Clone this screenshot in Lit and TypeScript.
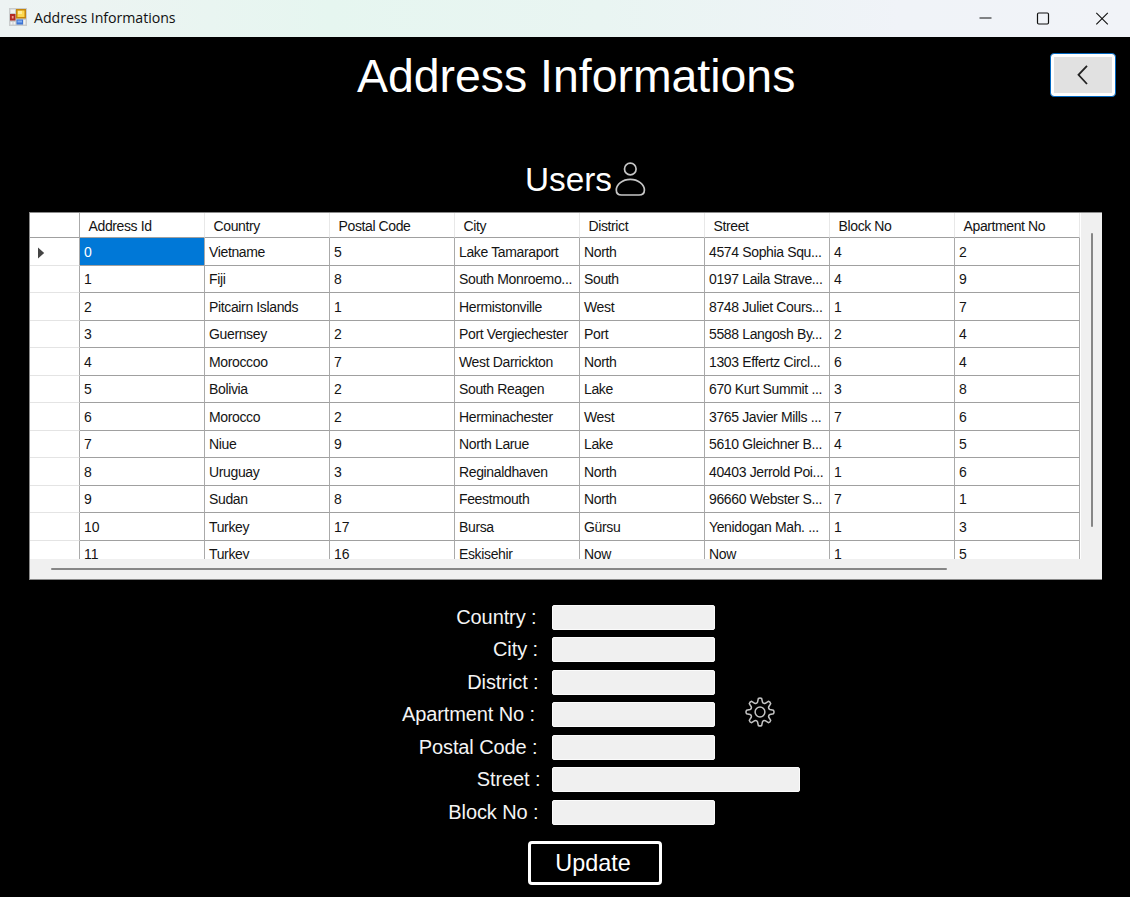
import { LitElement, html, css } from "lit";
import { customElement } from "lit/decorators.js";
import { classMap } from "lit/directives/class-map.js";

const COLUMNS = ["Address Id", "Country", "Postal Code", "City", "District", "Street", "Block No", "Apartment No"];

const ROWS: string[][] = [
  ["0", "Vietname", "5", "Lake Tamaraport", "North", "4574 Sophia Squ...", "4", "2"],
  ["1", "Fiji", "8", "South Monroemo...", "South", "0197 Laila Strave...", "4", "9"],
  ["2", "Pitcairn Islands", "1", "Hermistonville", "West", "8748 Juliet Cours...", "1", "7"],
  ["3", "Guernsey", "2", "Port Vergiechester", "Port", "5588 Langosh By...", "2", "4"],
  ["4", "Moroccoo", "7", "West Darrickton", "North", "1303 Effertz Circl...", "6", "4"],
  ["5", "Bolivia", "2", "South Reagen", "Lake", "670 Kurt Summit ...", "3", "8"],
  ["6", "Morocco", "2", "Herminachester", "West", "3765 Javier Mills ...", "7", "6"],
  ["7", "Niue", "9", "North Larue", "Lake", "5610 Gleichner B...", "4", "5"],
  ["8", "Uruguay", "3", "Reginaldhaven", "North", "40403 Jerrold Poi...", "1", "6"],
  ["9", "Sudan", "8", "Feestmouth", "North", "96660 Webster S...", "7", "1"],
  ["10", "Turkey", "17", "Bursa", "Gürsu", "Yenidogan Mah. ...", "1", "3"],
  ["11", "Turkey", "16", "Eskisehir", "Now", "Now", "1", "5"],
];

interface Field {
  label: string;
  // Distance from the end of the label to its box.
  gap: number;
  wide?: boolean;
  gear?: boolean;
}

const FIELDS: Field[] = [
  { label: "Country :", gap: 15.5 },
  { label: "City :", gap: 14 },
  { label: "District :", gap: 13.5 },
  { label: "Apartment No :", gap: 17 },
  { label: "Postal Code :", gap: 14.5 },
  { label: "Street :", gap: 11.5, wide: true },
  { label: "Block No :", gap: 13.5 },
];
FIELDS[3].gear = true;

@customElement("title-bar")
class TitleBar extends LitElement {
  static styles = css`
    :host {
      display: flex;
      flex: none;
      align-items: center;
      height: 37px;
      background: linear-gradient(90deg, #edf3f3 0, #ecf4f2 90px, #e6f6f0 330px, #e9f5f2 600px, #f0f3f8 900px, #f1f3f8 100%);
      color: #111;
      font: 14.2px "Open Sans", sans-serif;
    }
    .app-icon { margin: -3px 7px 0 9px; flex: none; }
    .caption { flex: 1; margin-top: -2px; letter-spacing: -0.06px; white-space: nowrap; }
    .controls { display: flex; }
    .control { display: block; width: 58.5px; height: 36px; }
  `;
  render() {
    return html`
      <svg class="app-icon" width="18" height="18" viewBox="0 0 18 18">
        <rect width="18" height="18" fill="#c9cccd" />
        <path d="M1.5 1.5h4.5v3.5h-4.5zM1.5 14h2v2.5h-2zM4.5 14h1.8v2.5h-1.8zM14.5 12h2v4.5h-2z" fill="#f1f3f3" />
        <rect x="7" y="1" width="10" height="9.5" fill="#c4860c" />
        <rect x="8.5" y="2.5" width="7" height="6.5" fill="#fcd850" />
        <rect x="9" y="3" width="4" height="3" fill="#ffec94" />
        <rect x="1" y="6" width="5.5" height="6.5" fill="#b22a23" />
        <rect x="2.8" y="8" width="1.8" height="2.5" fill="#ef9c8d" />
        <rect x="7.5" y="11.5" width="6.5" height="5" fill="#3d74d4" />
        <rect x="8.5" y="12.5" width="4.5" height="2" fill="#82b0f2" />
      </svg>
      <span class="caption">Address Informations</span>
      <div class="controls">
        <svg class="control" viewBox="0 0 58.5 36"><path d="M24.500 17h12" stroke="#111" stroke-width="1" /></svg>
        <svg class="control" viewBox="0 0 58.5 36"><rect x="24.500" y="12" width="11" height="11" rx="1.2" fill="none" stroke="#111" stroke-width="1.2" /></svg>
        <svg class="control" viewBox="0 0 58.5 36"><path d="M24.300 11.800l11.500 11.500M35.800 11.800L24.300 23.300" stroke="#111" stroke-width="1.1" /></svg>
      </div>
    `;
  }
}

@customElement("address-grid")
class AddressGrid extends LitElement {
  static styles = css`
    :host {
      display: grid;
      flex: none;
      grid-template-columns: 1fr 21px;
      grid-template-rows: 346px 20px;
      box-sizing: border-box;
      width: 1073px;
      height: 368px;
      border: 1px solid #8a8a8a;
      border-right: 0;
      background: #f0f0f0;
      color: #141414;
      font: 14px/26px "Liberation Sans", sans-serif;
      letter-spacing: -0.36px;
    }
    .view { overflow: hidden; background: #fff; }
    .row { display: grid; grid-template-columns: 50px repeat(8, 125px); height: 27.5px; }
    .row.header { height: 25px; }
    .cell {
      box-sizing: border-box;
      border-right: 1px solid #aaa;
      border-bottom: 1px solid #a0a0a0;
      padding: 0.6px 0 0 4px;
      overflow: hidden;
      white-space: nowrap;
    }
    .header .cell { padding: 0 0 0 8.6px; letter-spacing: -0.4px; border-right-color: #e8e8e8; }
    .header .cell.handle { border-right-color: #aaa; border-bottom-color: #a0a0a0; }
    .cell.handle { padding: 9px 0 0 7px; border-bottom-color: #e4e4e4; }
    .cell.number { letter-spacing: -0.1px; }
    .cell.selected { background: #0078d7; color: #fff; }
    .marker { display: block; }
    .vertical { padding: 20px 0 0 10px; }
    .vertical .thumb { width: 2px; height: 294px; border-radius: 1px; background: #868686; }
    .horizontal { grid-column: 1 / 3; padding: 9px 0 0 21px; }
    .horizontal .thumb { width: 896px; height: 2px; border-radius: 1px; background: #868686; }
  `;
  render() {
    return html`
      <div class="view">
        <div class="row header">
          <div class="cell handle"></div>
          ${COLUMNS.map((name) => html`<div class="cell">${name}</div>`)}
        </div>
        ${ROWS.map(
          (row, r) => html`<div class="row">
            <div class="cell handle">
              ${r === 0
                ? html`<svg class="marker" width="8" height="12" viewBox="0 0 8 12"><path d="M1 0.5L7.2 6L1 11.5z" fill="#444" /></svg>`
                : ""}
            </div>
            ${row.map(
              (text, c) =>
                html`<div class=${classMap({ cell: true, number: /^\d+$/.test(text), selected: r === 0 && c === 0 })}>${text}</div>`
            )}
          </div>`
        )}
      </div>
      <div class="vertical"><div class="thumb"></div></div>
      <div class="horizontal"><div class="thumb"></div></div>
    `;
  }
}

@customElement("address-form")
class AddressForm extends LitElement {
  static styles = css`
    :host {
      display: flex;
      flex: none;
      flex-direction: column;
      gap: 7.5px;
      color: #f4f4f4;
      font: 20px/25px "Liberation Sans", sans-serif;
      letter-spacing: -0.1px;
    }
    .line { display: flex; height: 25px; }
    .label { box-sizing: border-box; width: 552px; text-align: right; white-space: nowrap; padding-top: 0.4px; }
    .field { box-sizing: border-box; width: 163px; height: 25px; border: 1px solid #fbfbfb; border-radius: 2px; background: #f0f0f0; }
    .field.wide { width: 248px; }
    .gear { margin: -5.500px 0 0 30px; }
  `;
  render() {
    return html`
      ${FIELDS.map(
        ({ label, gap, wide, gear }) => html`
          <div class="line">
            <div class="label" style="padding-right:${gap}px">${label}</div>
            <div class=${classMap({ field: true, wide: !!wide })}></div>
            ${gear
              ? html`<svg class="gear" width="30" height="30" viewBox="-15 -15 30 30" fill="none" stroke="#c4c4c4" stroke-width="1.5" stroke-linejoin="round">
                  <path d=${gearPath()} />
                  <circle r="4.9" />
                </svg>`
              : ""}
          </div>
        `
      )}
    `;
  }
}

// Outline of an eight-toothed cog centred on the origin.
function gearPath(): string {
  const at = (radius: number, deg: number) => {
    const a = (deg * Math.PI) / 180;
    return `${(radius * Math.cos(a)).toFixed(2)} ${(radius * Math.sin(a)).toFixed(2)}`;
  };
  let d = `M${at(10.2, -14)}`;
  for (let i = 0; i < 8; i++) {
    const t = i * 45;
    d += `L${at(13.6, t - 7)}Q${at(14.5, t)} ${at(13.6, t + 7)}L${at(10.2, t + 14)}Q${at(8.8, t + 22.5)} ${at(10.2, t + 31)}`;
  }
  return d + "Z";
}

@customElement("app-root")
class AppRoot extends LitElement {
  static styles = css`
    :host {
      display: flex;
      flex-direction: column;
      width: 1130px;
      height: 897px;
      overflow: hidden;
      background: #000;
      color: #fff;
      font-family: "Liberation Sans", sans-serif;
    }
    .top { display: grid; flex: none; grid-template-columns: 1050px 66px; height: 119px; }
    .title { margin: 0 0 0 357px; padding-top: 12px; font-size: 46.4px; line-height: 54px; font-weight: 400; white-space: nowrap; }
    .back {
      display: grid; place-items: center; box-sizing: border-box;
      width: 66px; height: 44px; margin: 16px 0 0; padding: 0;
      border: 1px solid #0067c0; border-radius: 4px;
      background: #e1e1e1; box-shadow: inset 0 0 0 3px #fff;
    }
    .users { display: flex; flex: none; margin-left: 525px; height: 56px; }
    .users-title { width: 86px; margin: 0; padding-top: 5px; overflow: hidden; font-size: 33.3px; line-height: 38px; font-weight: 400; }
    .user-icon { margin: 5px 0 0 3px; }
    .grid { margin-left: 29px; }
    .form { margin-top: 24.5px; }
    .update {
      box-sizing: border-box; flex: none; width: 134px; height: 44px; margin: 16px 0 0 528px; padding: 0 4px 0 0;
      border: 3px solid #fff; border-radius: 4px; background: #000; color: #fff;
      font: 23.4px/36px "Liberation Sans", sans-serif;
    }
  `;
  render() {
    return html`
      <title-bar></title-bar>
      <header class="top">
        <h1 class="title">Address Informations</h1>
        <button class="back" aria-label="Back">
          <svg width="20" height="24" viewBox="0 0 20 24"><path d="M14 2.8L5.5 11.8L14 21" fill="none" stroke="#222" stroke-width="1.8" /></svg>
        </button>
      </header>
      <div class="users">
        <h2 class="users-title">Users</h2>
        <svg class="user-icon" width="32" height="36" viewBox="0 0 32 36" fill="none" stroke="#c6c6c6" stroke-width="1.7">
          <circle cx="16.3" cy="8" r="5.8" />
          <path d="M16.3 18.4C8.5 18.4 2.3 23.5 2.3 29C2.3 32.6 4.5 34 7.5 34H25C28.5 34 30.4 32.5 30.4 29C30.4 23.5 24 18.4 16.3 18.4Z" />
        </svg>
      </div>
      <address-grid class="grid"></address-grid>
      <address-form class="form"></address-form>
      <button class="update">Update</button>
    `;
  }
}
